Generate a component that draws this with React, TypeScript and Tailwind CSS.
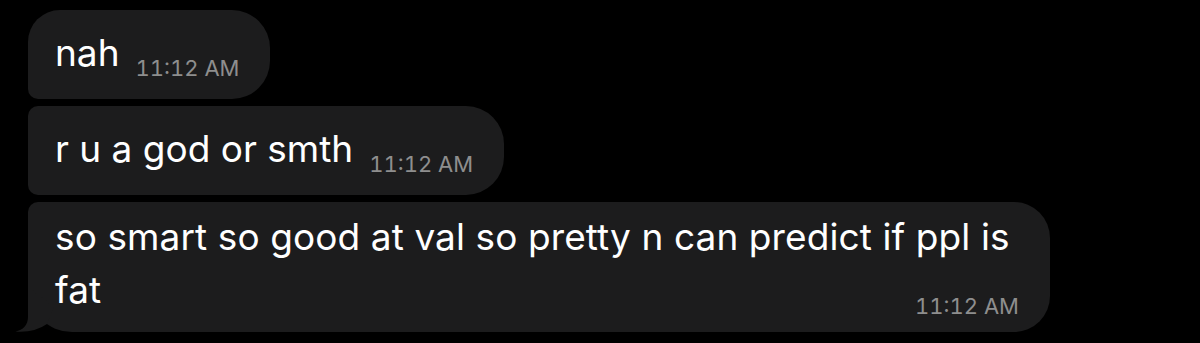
import React from 'react';

const Time = ({ className = '' }: { className?: string }) => (
    <span className={`text-[22px] leading-[24px] tabular-nums text-[#8e8e8e] whitespace-nowrap ${className}`}>11:12 AM</span>
);

const Tail = () => (
    <svg className="absolute left-[-14px] bottom-0" width="40" height="45" viewBox="0 0 40 45">
        <path d="M14 0 L14 30 C14 38 9 43 1.5 44.6 Q20 46 33 37 L40 20 Z" fill="#1c1c1d" />
    </svg>
);

const App = () => {
    return (
        <div className="w-full h-[343px] bg-black pt-[10px] pl-[28px] flex flex-col items-start gap-[7px] font-['Inter',sans-serif] text-white">
            <div className="h-[89px] flex items-start pt-[21px] pl-[27px] pr-[31px] bg-[#1c1c1d] rounded-tl-[32px] rounded-bl-[10px] rounded-r-[38px]">
                <span className="text-[37px] leading-[44px]">nah</span>
                <Time className="ml-[16px] mt-[25px]" />
            </div>
            <div className="h-[89px] flex items-start pt-[21px] pl-[27px] pr-[31px] bg-[#1c1c1d] rounded-l-[10px] rounded-r-[38px]">
                <span className="text-[37px] leading-[44px]">r u a god or smth</span>
                <Time className="ml-[16px] mt-[25px]" />
            </div>
            <div className="relative w-[1022px] h-[130px] pt-[13px] pl-[27px] pr-[31px] flex flex-col gap-[9px] bg-[#1c1c1d] rounded-tl-[10px] rounded-bl-[44px] rounded-r-[36px]">
                <span className="text-[37px] leading-[44px] tracking-[0.1px] whitespace-nowrap">so smart so good at val so pretty n can predict if ppl is</span>
                <div className="flex items-start justify-between">
                    <span className="text-[37px] leading-[44px] tracking-[0.1px]">fat</span>
                    <Time className="mt-[26px]" />
                </div>
                <Tail />
            </div>
        </div>
    );
};

export default App;
